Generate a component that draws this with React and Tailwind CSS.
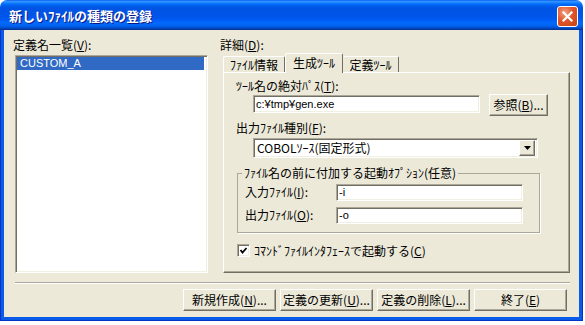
const U = ({ c }) => <u className="underline underline-offset-[1px]">{c}</u>;

const sunken =
  "border border-t-[#ACA899] border-l-[#ACA899] border-b-white border-r-white shadow-[inset_1px_1px_0_#716F64,inset_-1px_-1px_0_#F1EFE2]";
const raised =
  "border border-t-white border-l-white border-b-[#716F64] border-r-[#716F64] shadow-[inset_-1px_-1px_0_#ACA899] bg-[#ECE9D8]";

function Btn({ children, w }) {
  return (
    <div className={`${raised} ${w} h-[22px] flex items-center justify-center leading-[14px]`}>
      {children}
    </div>
  );
}

export default function App() {
  return (
    <div className="w-[585px] h-[325px] bg-white font-['Noto_Sans_CJK_JP',sans-serif] text-[12px] text-black">
      <div className="w-[583px] h-[321px] flex flex-col">
        {/* Title bar */}
        <div className="h-[30px] rounded-t-[7px] bg-[linear-gradient(180deg,#0058EE_0%,#3593FF_4%,#288EFF_7%,#127DFF_10%,#036FFC_13%,#0262EE_18%,#0057E5_24%,#0054E3_30%,#0055EB_56%,#005BF5_66%,#026AFE_76%,#0062EF_86%,#0052D6_92%,#0040AB_96%,#003092_100%)] flex items-center pl-[9px] pr-[5px] pt-[2px]">
          <span className="text-white font-bold text-[13px] leading-[16px] [text-shadow:1px_1px_0_#0A1883]">
            新しいﾌｧｲﾙの種類の登録
          </span>
          <div className="ml-auto w-[21px] h-[21px] rounded-[3px] border border-white bg-[radial-gradient(circle_at_35%_30%,#F2A386_0%,#E0572C_45%,#C8400F_100%)] flex items-center justify-center">
            <svg width="11" height="11" viewBox="0 0 11 11">
              <path d="M1.5 1.5 L9.5 9.5 M9.5 1.5 L1.5 9.5" stroke="white" strokeWidth="2.2" strokeLinecap="square" />
            </svg>
          </div>
        </div>

        {/* Frame */}
        <div className="flex-1 bg-[#0A5AE8] border-x border-b border-[#0033C8] px-[3px] pb-[3px] flex">
          <div className="flex-1 bg-[#ECE9D8] flex flex-col">
            {/* Top section */}
            <div className="flex pt-[8px]">
              {/* Left column */}
              <div className="w-[216px] pl-[9px] flex flex-col">
                <div className="h-[14px] leading-[14px] whitespace-nowrap">
                  定義名一覧(<U c="V" />):
                </div>
                <div className={`mt-[3px] ml-[2px] w-[193px] h-[218px] bg-white ${sunken} p-[1px]`}>
                  <div className="h-[13px] mr-[2px] bg-[#316AC5] text-white pl-[3px] leading-[13px] font-['Liberation_Sans',sans-serif] text-[11px]">
                    CUSTOM_A
                  </div>
                </div>
              </div>

              {/* Right column */}
              <div className="flex flex-col">
                <div className="h-[14px] leading-[14px] whitespace-nowrap">
                  詳細(<U c="D" />):
                </div>
                <div className="mt-[1px] ml-[3px] h-[19px] flex items-end">
                  <div className="w-[62px] h-[16px] border-l border-t border-white border-r border-r-[#716F64] rounded-t-[2px] flex items-center justify-center leading-[14px] whitespace-nowrap">
                    ﾌｧｲﾙ情報
                  </div>
                  <div className="relative z-10 -mb-[1px] w-[58px] h-[20px] bg-[#ECE9D8] border-l border-t border-white border-r border-r-[#716F64] rounded-t-[2px] flex items-start justify-center pt-[2px] leading-[14px] whitespace-nowrap">
                    生成ﾂｰﾙ
                  </div>
                  <div className="w-[56px] h-[16px] border-t border-white border-r border-r-[#716F64] rounded-t-[2px] flex items-center justify-center leading-[14px] whitespace-nowrap">
                    定義ﾂｰﾙ
                  </div>
                </div>
                <div className="ml-[3px] w-[347px] h-[201px] border border-t-white border-l-white border-b-[#716F64] border-r-[#716F64] shadow-[inset_-1px_-1px_0_#ACA899] pl-[12px] flex flex-col">
                  <div className="mt-[6px] h-[14px] leading-[14px] whitespace-nowrap">
                    ﾂｰﾙ名の絶対ﾊﾟｽ(<U c="T" />):
                  </div>
                  <div className="h-[22px] flex items-center">
                    <div className={`ml-[17px] w-[227px] h-[18px] bg-white ${sunken} pl-[2px] flex items-center leading-[14px] font-['Liberation_Sans',sans-serif] text-[11px]`}>
                      c:¥tmp¥gen.exe
                    </div>
                    <div className="ml-[9px] mt-[1px]">
                      <Btn w="w-[59px]">
                        参照(<U c="B" />)...
                      </Btn>
                    </div>
                  </div>
                  <div className="mt-[6px] h-[14px] leading-[14px] whitespace-nowrap">
                    出力ﾌｧｲﾙ種別(<U c="F" />):
                  </div>
                  <div className={`mt-[3px] ml-[17px] w-[285px] h-[20px] bg-white ${sunken} p-[2px] flex items-center`}>
                    <div className="flex-1 pl-[1px] leading-[14px] whitespace-nowrap">COBOLｿｰｽ(固定形式)</div>
                    <div className={`${raised} w-[16px] h-[16px] flex items-center justify-center`}>
                      <svg width="7" height="4" viewBox="0 0 7 4">
                        <polygon points="0,0 7,0 3.5,4" fill="black" />
                      </svg>
                    </div>
                  </div>
                  <fieldset className="mt-[8px] ml-[1px] w-[303px] border border-[#ACA899] shadow-[1px_1px_0_#FFFFFF] pl-[7px] pb-[8px] pt-[3px]">
                    <legend className="ml-[-3px] px-[2px] h-[14px] leading-[14px] whitespace-nowrap">
                      ﾌｧｲﾙ名の前に付加する起動ｵﾌﾟｼｮﾝ(任意)
                    </legend>
                    <div className="h-[18px] flex items-center">
                      <div className="w-[91px] leading-[14px] whitespace-nowrap">
                        入力ﾌｧｲﾙ(<U c="I" />):
                      </div>
                      <div className={`w-[187px] h-[17px] bg-white ${sunken} pl-[2px] flex items-center leading-[14px] font-['Liberation_Sans',sans-serif] text-[11px]`}>
                        -i
                      </div>
                    </div>
                    <div className="mt-[5px] h-[18px] flex items-center">
                      <div className="w-[91px] leading-[14px] whitespace-nowrap">
                        出力ﾌｧｲﾙ(<U c="O" />):
                      </div>
                      <div className={`w-[187px] h-[17px] bg-white ${sunken} pl-[2px] flex items-center leading-[14px] font-['Liberation_Sans',sans-serif] text-[11px]`}>
                        -o
                      </div>
                    </div>
                  </fieldset>
                  <div className="mt-[11px] ml-[1px] flex items-center h-[13px]">
                    <div className={`w-[13px] h-[13px] bg-white ${sunken} flex items-center justify-center`}>
                      <svg width="9" height="9" viewBox="0 0 9 9">
                        <polyline points="1.5,4 3.5,6.5 7.5,2" fill="none" stroke="black" strokeWidth="1.8" />
                      </svg>
                    </div>
                    <div className="ml-[4px] leading-[14px] whitespace-nowrap">
                      ｺﾏﾝﾄﾞﾌｧｲﾙｲﾝﾀﾌｪｰｽで起動する(<U c="C" />)
                    </div>
                  </div>
                </div>
              </div>
            </div>

            {/* Separator */}
            <div className="mt-[9px] ml-[11px] w-[555px] h-[2px] border-t border-[#ACA899] border-b border-b-white" />

            {/* Buttons */}
            <div className="mt-[5px] ml-[179px] flex gap-[4px]">
              <Btn w="w-[93px]">
                新規作成(<U c="N" />)...
              </Btn>
              <Btn w="w-[93px]">
                定義の更新(<U c="U" />)...
              </Btn>
              <Btn w="w-[93px]">
                定義の削除(<U c="L" />)...
              </Btn>
              <Btn w="w-[93px]">
                終了(<U c="E" />)
              </Btn>
            </div>
          </div>
        </div>
      </div>
    </div>
  );
}
